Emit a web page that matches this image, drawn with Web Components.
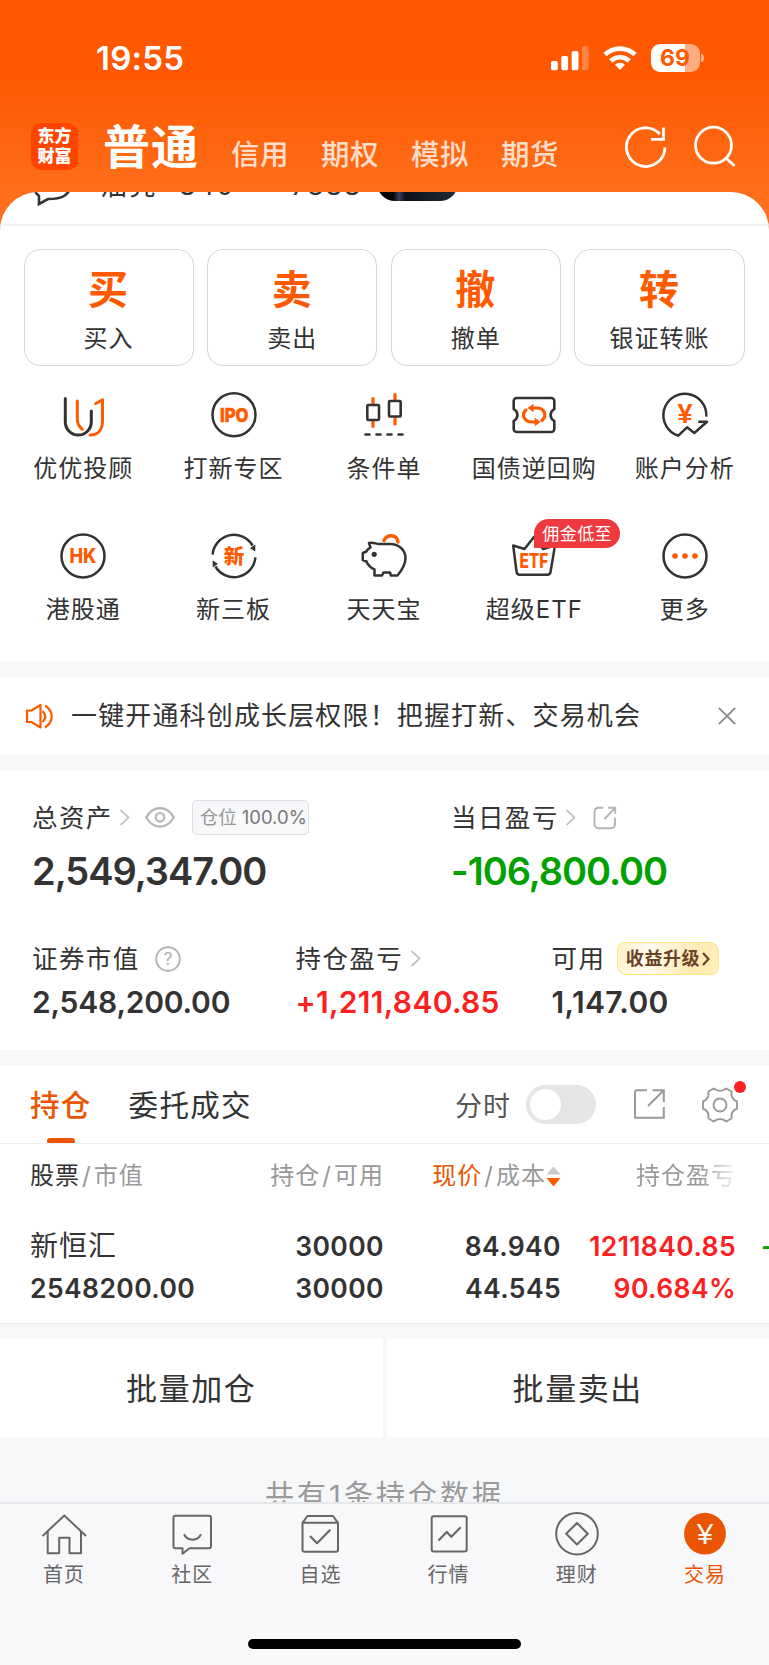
<!DOCTYPE html>
<html lang="zh-CN">
<head>
<meta charset="UTF-8">
<meta name="viewport" content="width=device-width, initial-scale=1.0">
<title>交易</title>
<style>
    body {
        margin: 0;
        font-family: Inter, "Noto Sans CJK SC", sans-serif;
        color: #333;
        background: #f6f7f9;
    }
</style>
</head>
<body>
<trade-app></trade-app>

<script>
const ICONS = {
    refresh: { size: [44, 44], body: `
        <g fill="none" stroke="#fff" stroke-width="2.8">
            <path d="M41 22.5A19.3 19.3 0 1 1 35.8 9"/>
            <path d="M39.5 2.5V14.3H27"/>
        </g>` },
    search: { size: [44, 44], body: `
        <g fill="none" stroke="#fff" stroke-width="2.8">
            <circle cx="20.5" cy="20.2" r="18"/>
            <path d="M33 33L41.5 41"/>
        </g>` },
    signal: { size: [38, 26], body: `
        <g fill="#fff">
            <rect x="0" y="16" width="6.8" height="9.3" rx="1.8"/>
            <rect x="10.3" y="11" width="6.8" height="14.3" rx="1.8"/>
            <rect x="20.7" y="6" width="6.8" height="19.3" rx="1.8"/>
            <rect x="31" y="1" width="6.8" height="24.3" rx="1.8" opacity=".25"/>
        </g>` },
    wifi: { size: [34, 26], body: `
        <g fill="none" stroke="#fff" stroke-width="4.6">
            <path d="M2 9.7a21.5 21.5 0 0 1 30 0"/>
            <path d="M7.8 16a13.2 13.2 0 0 1 18.4 0"/>
        </g>
        <path d="M12 19.8a7.3 7.3 0 0 1 10 0l-5 5.3z" fill="#fff"/>` },
    advisor: { size: [50, 50], body: `
        <g fill="none" stroke-width="3" stroke-linecap="round" stroke-linejoin="round">
            <path d="M7.3 8.5V32A13 13 0 0 0 33.3 32V21" stroke="#333"/>
            <path d="M19.3 11V29c0 4 1.5 7.5 5 10.3M37.7 13.5L44.5 9.7V31c0 9-5 14-12.5 14" stroke="#ff5a00"/>
        </g>` },
    ipo: { size: [50, 50], body: `
        <circle cx="25" cy="24.7" r="21.5" fill="none" stroke="#333" stroke-width="2.5"/>
        <text x="25.2" y="31.6" font-size="19" font-weight="800" text-anchor="middle" fill="#ff5a00" stroke="#ff5a00" stroke-width=".6" textLength="28.5" lengthAdjust="spacingAndGlyphs">IPO</text>` },
    condition: { size: [50, 50], body: `
        <g fill="none" stroke-width="2.6" stroke-linecap="round">
            <path d="M14 8.5V14M14 31V36.5M36 4.5V10M36 28V34" stroke="#ff5a00" stroke-width="3.2"/>
            <rect x="8.3" y="15" width="11.7" height="15" rx="1" stroke="#333"/>
            <rect x="30" y="11" width="11.7" height="15.5" rx="1" stroke="#333"/>
            <path d="M6.5 44.5H10.5M17.5 44.5H21.5M28.5 44.5H32.5M39.5 44.5H43.5" stroke="#333"/>
        </g>` },
    bond: { size: [50, 50], body: `
        <path d="M4.7 19V11a3 3 0 0 1 3-3H42.3a3 3 0 0 1 3 3V19c-5 3-5 9 0 12V39a3 3 0 0 1-3 3H7.7a3 3 0 0 1-3-3V31c5-3 5-9 0-12z" fill="none" stroke="#333" stroke-width="2.6"/>
        <g fill="none" stroke="#ff5a00" stroke-width="3.2" stroke-linecap="round">
            <path d="M23 18H27.5C35.5 18 38.5 25.5 33 30.5"/>
            <path d="M27 32H23C15 32 12 24.5 17 20"/>
        </g>
        <path d="M18.5 18L24.5 13.7V22.3zM31.7 32L25.7 27.7V36.3z" fill="#ff5a00"/>` },
    analysis: { size: [50, 50], body: `
        <path d="M46.3 26.7A21.5 21.5 0 1 0 18.3 45.7L27 37.3L34.3 43L47 31.7H38.3" fill="none" stroke="#333" stroke-width="2.5" stroke-linejoin="round"/>
        <text x="25" y="32.5" font-family="Liberation Sans" font-size="27" font-weight="700" text-anchor="middle" fill="#ff5a00">¥</text>` },
    hk: { size: [50, 50], body: `
        <circle cx="25" cy="25" r="21.5" fill="none" stroke="#333" stroke-width="2.5"/>
        <text x="25" y="32.3" font-size="20" font-weight="800" text-anchor="middle" fill="#ff5a00" textLength="27" lengthAdjust="spacingAndGlyphs">HK</text>` },
    newthird: { size: [50, 50], body: `
        <g fill="none" stroke="#333" stroke-width="2.5">
            <path d="M3.6 23.7A21.5 21.5 0 0 1 43.6 14.5"/>
            <path d="M46.4 26.3A21.5 21.5 0 0 1 6.4 35.5"/>
        </g>
        <path d="M41 17.3L46.3 13.5V20.5zM9 32.7L3.7 36.5V29.5z" fill="#333"/>
        <text x="25" y="32.6" font-size="20.5" font-weight="900" text-anchor="middle" fill="#ff5a00">新</text>` },
    piggy: { size: [50, 50], body: `
        <path d="M10 12C14 10.7 17 13 20 13H31C41 13 46.5 20 46.5 27C46.5 33 43 39 38.5 44.5H32L31 41.5H24.5L23 44.5H15.5V38.5C11 36.5 8.5 33 7.5 30.5L3.8 29V22L7.5 20.5C8 18.5 10 17.5 11.5 16.5Z" fill="none" stroke="#333" stroke-width="2.5" stroke-linejoin="round"/>
        <circle cx="15.2" cy="23.3" r="2.6" fill="#333"/>
        <path d="M25 9.5C28 3 38 3 39 11" fill="none" stroke="#ff5a00" stroke-width="3.4" stroke-linecap="round"/>` },
    etf: { size: [50, 50], body: `
        <path d="M4.2 14.5L7.6 41Q8 43.7 10.6 43.7H38.4Q41 43.7 41.5 41L46 14.5L34 18L25 6L15.5 18Z" fill="none" stroke="#333" stroke-width="2.5" stroke-linejoin="round"/>
        <text x="24.9" y="36.8" font-size="20" font-weight="800" text-anchor="middle" fill="#ff5a00" textLength="29" lengthAdjust="spacingAndGlyphs">ETF</text>` },
    more: { size: [50, 50], body: `
        <circle cx="25" cy="25" r="21.5" fill="none" stroke="#333" stroke-width="2.5"/>
        <g fill="#ff5a00"><circle cx="15" cy="25" r="2.8"/><circle cx="25" cy="25" r="2.8"/><circle cx="35" cy="25" r="2.8"/></g>` },
    speaker: { size: [28, 26], body: `
        <g fill="none" stroke="#ff5a00" stroke-width="2.2" stroke-linejoin="round">
            <path d="M2 7.5H6.5L15.5 2V24.5L6.5 19H2Z"/>
            <path d="M17.5 8C21 11.5 21 15.5 17.5 19M20 2.5C29 8.5 29 18.5 20 24.5"/>
        </g>` },
    close: { size: [18, 18], body: `<path d="M.8.8L17.2 17.2M17.2.8L.8 17.2" stroke="#888" stroke-width="1.8"/>` },
    chevron: { size: [11, 17], body: `<path d="M1.5 1L9.5 8.5L1.5 16" fill="none" stroke="#c4c4c6" stroke-width="1.8"/>` },
    eye: { size: [30, 21], body: `
        <g fill="none" stroke="#b4b4b4" stroke-width="2.1">
            <path d="M1.3 10.5C8-2 22-2 28.7 10.5C22 22.5 8 22.5 1.3 10.5Z" stroke-linejoin="round"/>
            <circle cx="15" cy="10.3" r="4.3"/>
        </g>` },
    shareround: { size: [24, 24], body: `
        <g fill="none" stroke="#b4b4b4" stroke-width="1.9" stroke-linecap="round">
            <path d="M9.5 1.8H5.5a4 4 0 0 0-4 4V18.2a4 4 0 0 0 4 4H18a4 4 0 0 0 4-4V12.5"/>
            <path d="M12 12.5L22 2M16 1.8H22.2V7"/>
        </g>` },
    share: { size: [31, 31], body: `
        <g fill="none" stroke="#999" stroke-width="2" stroke-linejoin="round">
            <path d="M13 1.2H3a2 2 0 0 0-2 2V28.800H29.800V18"/>
            <path d="M14 17L29 2M18.5 1.200H29.800V13"/>
        </g>` },
    help: { size: [26, 26], body: `
        <circle cx="13" cy="13" r="11.800" fill="none" stroke="#b4b4b4" stroke-width="1.900"/>
        <text x="13" y="19" font-size="17" text-anchor="middle" fill="#aaa">?</text>` },
    gear: { size: [38, 38], body: `
        <g fill="none" stroke="#999" stroke-width="1.9" stroke-linejoin="round">
            <path d="M12.7 2.5C16.5 5.5 21.5 5.5 25.3 2.5L30.5 5.5C30 10.5 32 14 36 15.5V22.5C32 24 30 27.5 30.5 32.5L25.3 35.5C21.5 32.5 16.5 32.5 12.7 35.5L7.5 32.5C8 27.5 6 24 2 22.5V15.5C6 14 8 10.5 7.5 5.5Z"/>
            <circle cx="19" cy="19" r="6.5"/>
        </g>` },
    sort: { size: [15, 21], body: `
        <path d="M7.5 0.5L14.5 8.5H.5Z" fill="#c8c8c8"/>
        <path d="M7.5 20.5L14.5 12H.5Z" fill="#ff5a00"/>` },
    home: { size: [46, 46], body: `
        <g fill="none" stroke="currentColor" stroke-width="2">
            <path d="M1.5 25L23.3 4.5L45 25"/>
            <path d="M6.7 20.5V42.3H18.2V26.7H28.5V42.3H40V20.5" stroke-linejoin="round"/>
        </g>` },
    community: { size: [46, 46], body: `
        <g fill="none" stroke="currentColor" stroke-width="2" stroke-linejoin="round">
            <path d="M13.5 37.3H6.5a2 2 0 0 1-2-2V6.7a2 2 0 0 1 2-2H40a2 2 0 0 1 2 2V35.3a2 2 0 0 1-2 2H20.5L13.5 42.7Z"/>
            <path d="M15 23.3C18.5 30.5 28.5 30.5 32 23.3"/>
        </g>` },
    watch: { size: [46, 46], body: `
        <g fill="none" stroke="currentColor" stroke-width="2" stroke-linejoin="round">
            <path d="M5.5 11.8L10.5 5H36L41 11.8V38.7a2 2 0 0 1-2 2H7.5a2 2 0 0 1-2-2ZM5.5 11.8H41"/>
            <path d="M13 25L20 32.3L33.3 18.7"/>
        </g>` },
    market: { size: [46, 46], body: `
        <g fill="none" stroke="currentColor" stroke-width="2">
            <rect x="5.7" y="5.2" width="35" height="35.3" rx="2"/>
            <path d="M12.5 29.5L20.7 21L25.3 25.8L34.7 16.3"/>
        </g>` },
    wealth: { size: [46, 46], body: `
        <g fill="none" stroke="currentColor" stroke-width="2" stroke-linejoin="round">
            <circle cx="23" cy="22.7" r="20.8"/>
            <path d="M23 12L33.8 22.7L23 33.5L12.2 22.7Z"/>
        </g>` },
    trade: { size: [46, 46], body: `
        <circle cx="23" cy="22.7" r="20.9" fill="#ea5504"/>
        <text x="23" y="33" font-family="Liberation Sans" font-size="29" text-anchor="middle" fill="#fff">¥</text>` }
};

class AppIcon extends HTMLElement {
    connectedCallback() {
        const icon = ICONS[this.getAttribute('name')];
        const [w, h] = icon.size;
        this.attachShadow({ mode: 'open' });
        this.shadowRoot.innerHTML = `
            <style>
                :host { display: block; flex: none; width: ${w}px; height: ${h}px; letter-spacing: 0; }
                svg { display: block; overflow: visible; }
            </style>
            <svg width="${w}" height="${h}" viewBox="0 0 ${w} ${h}">${icon.body}</svg>
        `;
    }
}

class StatusBar extends HTMLElement {
    connectedCallback() {
        this.attachShadow({ mode: 'open' });
        this.shadowRoot.innerHTML = `
            <style>
                :host {
                    display: flex;
                    align-items: center;
                    height: 115px;
                    padding: 0 65px 0 96px;
                    box-sizing: border-box;
                    color: #fff;
                }
                time { flex: 1; font-size: 33px; font-weight: 600; line-height: 40px; letter-spacing: 0.2px; }
                .wifi { margin: 0 14px 0 14px; }
                .battery {
                    width: 49px;
                    height: 28px;
                    border-radius: 9px;
                    background: linear-gradient(90deg, #fff 70%, #ffac80 70%);
                    color: #ff5a00;
                    font-size: 23px;
                    font-weight: 700;
                    line-height: 28px;
                    text-align: center;
                }
                .nub { width: 3px; height: 8px; margin-left: 1.5px; border-radius: 0 4px 4px 0; background: #ffac80; }
            </style>
            <time>19:55</time>
            <app-icon name="signal"></app-icon>
            <app-icon class="wifi" name="wifi"></app-icon>
            <div class="battery">69</div>
            <div class="nub"></div>
        `;
    }
}

class TopNav extends HTMLElement {
    connectedCallback() {
        this.attachShadow({ mode: 'open' });
        this.shadowRoot.innerHTML = `
            <style>
                :host { display: flex; height: 76.5px; padding: 0 32px 0 31px; box-sizing: border-box; color: #fff; }
                .logo {
                    width: 47px;
                    height: 47px;
                    margin-top: 8px;
                    padding-top: 4px;
                    box-sizing: border-box;
                    border-radius: 10px;
                    background: #ff4400;
                    font-size: 17px;
                    font-weight: 900;
                    line-height: 19.5px;
                    text-align: center;
                }
                .current { margin: 9px 0 0 25px; width: 128px; font-size: 47px; font-weight: 700; line-height: 46px; letter-spacing: 1px; }
                .others { flex: 1; display: flex; margin-top: 24px; font-size: 28.5px; font-weight: 500; line-height: 31px; letter-spacing: 0.5px; color: rgba(255, 255, 255, 0.8); }
                .others span { width: 90px; }
                .search { margin-left: 25px; }
                app-icon { margin-top: 10px; }
            </style>
            <div class="logo">东方<br>财富</div>
            <div class="current">普通</div>
            <div class="others"><span>信用</span><span>期权</span><span>模拟</span><span>期货</span></div>
            <app-icon name="refresh"></app-icon>
            <app-icon class="search" name="search"></app-icon>
        `;
    }
}

// Index ticker, mostly scrolled away under the header
class IndexTicker extends HTMLElement {
    connectedCallback() {
        this.attachShadow({ mode: 'open' });
        this.shadowRoot.innerHTML = `
            <style>
                :host { display: block; height: 34px; box-sizing: border-box; overflow: hidden; border-bottom: 2px solid #f2f2f3; }
                .row { display: flex; align-items: flex-start; height: 50px; margin-top: -32px; padding-left: 34px; font-size: 27px; line-height: 27px; white-space: nowrap; }
                svg { margin-top: 3px; overflow: visible; }
                span { margin-top: 12px; letter-spacing: 1.5px; }
                .name { margin-left: 27px; width: 79px; letter-spacing: 2px; }
                .num { width: 112px; }
                .change { width: 86px; }
                .pill { width: 81px; height: 40px; margin-top: 1px; border-radius: 18px; background: linear-gradient(90deg, #050505 20%, #3b3f5e 27%, #0d1118 35%, #222b3a); }
            </style>
            <div class="row">
                <svg width="39" height="40" viewBox="0 0 39 40"><path d="M2 30L5 33V41L14 36C26 36 37 34 37 18C37 8 28 2 19 2S1 8 1 18C1 23 1 27 2 30Z" fill="none" stroke="#333" stroke-width="2.6"/></svg>
                <span class="name">油亮</span>
                <span class="num">840</span>
                <span class="change">7388</span>
                <div class="pill"></div>
            </div>
        `;
    }
}

class TradeButton extends HTMLElement {
    connectedCallback() {
        this.attachShadow({ mode: 'open' });
        this.shadowRoot.innerHTML = `
            <style>
                :host {
                    flex: 1;
                    display: flex;
                    flex-direction: column;
                    align-items: center;
                    height: 117px;
                    box-sizing: border-box;
                    border: 1px solid #d6d6d6;
                    border-radius: 16px;
                    background: #fff;
                }
                .char { margin: 20px 1px 0 0; font-size: 40px; font-weight: 700; line-height: 40px; color: #ff5a00; }
                .label { margin-top: 13px; font-size: 24px; line-height: 32px; letter-spacing: 1px; }
            </style>
            <div class="char">${this.getAttribute('char')}</div>
            <div class="label"><slot></slot></div>
        `;
    }
}

class QuickEntry extends HTMLElement {
    connectedCallback() {
        const badge = this.getAttribute('badge');
        this.attachShadow({ mode: 'open' });
        this.shadowRoot.innerHTML = `
            <style>
                :host { position: relative; display: flex; flex-direction: column; align-items: center; height: 140.6px; }
                .label { margin-top: 13px; font-size: 24px; line-height: 32px; letter-spacing: 1px; white-space: nowrap; }
                .badge {
                    position: absolute;
                    left: 75px;
                    top: -12px;
                    width: 86px;
                    height: 29px;
                    border-radius: 15px 15px 15px 0;
                    background: #ee3a3e;
                    color: #fff;
                    font-size: 17px;
                    line-height: 30px;
                    letter-spacing: 0.4px;
                    text-align: center;
                }
            </style>
            <app-icon name="${this.getAttribute('icon')}"></app-icon>
            <div class="label"><slot></slot></div>
            ${badge ? `<div class="badge">${badge}</div>` : ''}
        `;
    }
}

class NoticeBar extends HTMLElement {
    connectedCallback() {
        this.attachShadow({ mode: 'open' });
        this.shadowRoot.innerHTML = `
            <style>
                :host { display: flex; align-items: center; height: 78px; padding: 0 33px 0 25px; box-sizing: border-box; background: #fff; }
                .text { flex: 1; margin-left: 18px; font-size: 26px; line-height: 36px; letter-spacing: 1.15px; white-space: nowrap; }
            </style>
            <app-icon name="speaker"></app-icon>
            <div class="text"><slot></slot></div>
            <app-icon name="close"></app-icon>
        `;
    }
}

class AssetField extends HTMLElement {
    connectedCallback() {
        this.attachShadow({ mode: 'open' });
        this.shadowRoot.innerHTML = `
            <style>
                :host { display: block; }
                .head { display: flex; align-items: center; height: 36px; font-size: 25.5px; line-height: 36px; letter-spacing: 1.4px; white-space: nowrap; }
                .value { font-size: 30px; font-weight: 600; line-height: 40px; margin-top: 5px; color: var(--value-color, #333); letter-spacing: var(--value-spacing, -0.2px); white-space: nowrap; }
                :host([large]) .value { font-size: 38px; line-height: 46px; margin-top: 12px; }
            </style>
            <div class="head">${this.getAttribute('label')}<slot></slot></div>
            <div class="value">${this.getAttribute('value')}</div>
        `;
    }
}

class AssetSummary extends HTMLElement {
    connectedCallback() {
        this.attachShadow({ mode: 'open' });
        this.shadowRoot.innerHTML = `
            <style>
                :host { display: block; height: 279px; padding: 28.5px 0 0 32px; box-sizing: border-box; background: #fff; }
                .total { display: grid; grid-template-columns: 419px 1fr; height: 141px; --value-spacing: -1.05px; }
                .detail { display: grid; grid-template-columns: 263.5px 256px 1fr; }
                .green { --value-color: #00a100; }
                .red { --value-color: #fc2020; --value-spacing: 0.3px; }
                .usable { --value-spacing: 0.4px; }
                .chevron { margin-left: 6.5px; }
                .eye { margin-left: 15px; }
                .shareround { margin-left: 17px; }
                .help { margin-left: 15px; }
                .ratio {
                    width: 117px;
                    height: 35px;
                    margin-left: 16.5px;
                    padding-left: 7px;
                    box-sizing: border-box;
                    border: 1.5px solid #dedfe4;
                    border-radius: 5px;
                    background: #f7f8fa;
                    font-size: 18.5px;
                    line-height: 33px;
                    letter-spacing: 0;
                    color: #999;
                }
                .ratio b { font-weight: 400; color: #777; margin-left: 5px; }
                .upgrade {
                    display: flex;
                    align-items: center;
                    width: 102px;
                    height: 33px;
                    margin-left: 11.5px;
                    padding-left: 8px;
                    box-sizing: border-box;
                    border: 1.5px solid #fde58a;
                    border-radius: 7px 9px;
                    background: linear-gradient(105deg, #fff1c4, #fffaf0 28%, #fff6dc 45%, #ffe9b4 75%, #fff0b8);
                    color: #6b4226;
                    font-size: 18px;
                    font-weight: 700;
                    letter-spacing: 0.6px;
                }
                .upgrade svg { margin-left: 2px; }
            </style>
            <div class="total">
                <asset-field large label="总资产" value="2,549,347.00">
                    <app-icon class="chevron" name="chevron"></app-icon>
                    <app-icon class="eye" name="eye"></app-icon>
                    <span class="ratio">仓位<b>100.0%</b></span>
                </asset-field>
                <asset-field large class="green" label="当日盈亏" value="-106,800.00">
                    <app-icon class="chevron" name="chevron"></app-icon>
                    <app-icon class="shareround" name="shareround"></app-icon>
                </asset-field>
            </div>
            <div class="detail">
                <asset-field label="证券市值" value="2,548,200.00">
                    <app-icon class="help" name="help"></app-icon>
                </asset-field>
                <asset-field class="red" label="持仓盈亏" value="+1,211,840.85">
                    <app-icon class="chevron" name="chevron"></app-icon>
                </asset-field>
                <asset-field class="usable" label="可用" value="1,147.00">
                    <span class="upgrade">收益升级<svg width="8" height="14" viewBox="0 0 8 14"><path d="M1 1L6.5 7L1 13" fill="none" stroke="#6b4226" stroke-width="2.2"/></svg></span>
                </asset-field>
            </div>
        `;
    }
}

class PositionTabs extends HTMLElement {
    connectedCallback() {
        this.attachShadow({ mode: 'open' });
        this.shadowRoot.innerHTML = `
            <style>
                :host { display: flex; align-items: center; height: 78px; padding: 0 30px; box-sizing: border-box; border-bottom: 1px solid #eeeeef; }
                .tab { display: flex; flex-direction: column; align-items: center; height: 77px; font-size: 29.5px; line-height: 78px; letter-spacing: 1.3px; }
                .active { color: #ea5504; font-weight: 500; margin-right: 37px; }
                .active::after { content: ""; width: 28px; height: 5px; margin-top: -6px; border-radius: 3px 3px 1px 1px; background: #ea5504; }
                .time { flex: 1; text-align: right; font-size: 27px; letter-spacing: 1px; color: #555; }
                .switch { width: 70px; height: 39px; margin: 0 38px 0 15px; padding: 4px; box-sizing: border-box; border-radius: 20px; background: #e5e5e7; }
                .switch i { display: block; width: 31px; height: 31px; border-radius: 50%; background: #fff; }
                .settings { position: relative; margin-left: 36px; }
                .dot { position: absolute; right: -7px; top: -5px; width: 12px; height: 12px; border-radius: 50%; background: #fb2222; }
            </style>
            <div class="tab active">持仓</div>
            <div class="tab">委托成交</div>
            <div class="time">分时</div>
            <div class="switch"><i></i></div>
            <app-icon name="share"></app-icon>
            <div class="settings"><app-icon name="gear"></app-icon><i class="dot"></i></div>
        `;
    }
}

class PositionTable extends HTMLElement {
    connectedCallback() {
        this.attachShadow({ mode: 'open' });
        this.shadowRoot.innerHTML = `
            <style>
                :host { display: block; height: 180px; overflow: hidden; box-sizing: border-box; border-bottom: 1px solid #ebecee; }
                .row { display: grid; grid-template-columns: 220px 134px 177px 175px 60px; padding-left: 30px; }
                .row > * { text-align: right; white-space: nowrap; }
                .row > :first-child { text-align: left; }
                .head { height: 64px; font-size: 24px; line-height: 64px; letter-spacing: 1px; color: #999; }
                .head s { text-decoration: none; margin: 0 2px; }
                .head .dark { color: #333; }
                .head .hot { color: #ea5504; }
                .price { display: flex; justify-content: flex-end; align-items: center; }
                .fade { -webkit-mask: linear-gradient(90deg, #000 80%, rgba(0, 0, 0, 0.1)); mask: linear-gradient(90deg, #000 80%, rgba(0, 0, 0, 0.1)); }
                .first { margin-top: 17px; }
                .data { height: 42px; font-size: 26.5px; font-weight: 600; line-height: 42px; letter-spacing: 0.4px; }
                .name { font-size: 28px; font-weight: 400; letter-spacing: 1px; }
                .red { color: #fc2020; }
                .row > .green { color: #00a100; text-align: left; padding-left: 25px; }
            </style>
            <div class="row head">
                <div><span class="dark">股票</span><s>/</s>市值</div>
                <div>持仓<s>/</s>可用</div>
                <div class="price"><span class="hot">现价</span><s>/</s>成本<app-icon name="sort"></app-icon></div>
                <div class="fade">持仓盈亏</div>
            </div>
            <div class="row data first">
                <div class="name">新恒汇</div><div>30000</div><div>84.940</div><div class="red">1211840.85</div><div class="green">-</div>
            </div>
            <div class="row data">
                <div>2548200.00</div><div>30000</div><div>44.545</div><div class="red">90.684%</div>
            </div>
        `;
    }
}

class BatchActions extends HTMLElement {
    connectedCallback() {
        this.attachShadow({ mode: 'open' });
        this.shadowRoot.innerHTML = `
            <style>
                :host { display: grid; grid-template-columns: 1fr 1fr; gap: 4px; }
                div { height: 98px; background: #fff; font-size: 31px; line-height: 100px; letter-spacing: 1.6px; text-align: center; }
            </style>
            <div>批量加仓</div>
            <div>批量卖出</div>
        `;
    }
}

class TabItem extends HTMLElement {
    connectedCallback() {
        this.attachShadow({ mode: 'open' });
        this.shadowRoot.innerHTML = `
            <style>
                :host { flex: 1; display: flex; flex-direction: column; align-items: center; color: #666; font-size: 20px; line-height: 26px; letter-spacing: 1px; }
                :host([active]) { color: #ea5504; }
                span { margin-top: 5px; }
            </style>
            <app-icon name="${this.getAttribute('icon')}"></app-icon>
            <span><slot></slot></span>
        `;
    }
}

class TabBar extends HTMLElement {
    connectedCallback() {
        this.attachShadow({ mode: 'open' });
        this.shadowRoot.innerHTML = `
            <style>
                :host { display: flex; flex-direction: column; align-items: center; height: 163px; box-sizing: border-box; border-top: 2px solid #e6e7ea; background: #f8f8fb; }
                .items { display: flex; width: 100%; height: 135px; padding-top: 7px; box-sizing: border-box; }
                .indicator { width: 273px; height: 10px; border-radius: 5px; background: #000; }
            </style>
            <div class="items"><slot></slot></div>
            <div class="indicator"></div>
        `;
    }
}

class TradeApp extends HTMLElement {
    connectedCallback() {
        this.attachShadow({ mode: 'open' });
        this.shadowRoot.innerHTML = `
            <style>
                :host { display: flex; flex-direction: column; height: 1665px; overflow: hidden; background: #f6f7f9; }
                .hero { background: linear-gradient(180deg, #ff5800 0, #ff5800 75px, #ff6e1a 191px); }
                .sheet { height: 469.5px; overflow: hidden; border-radius: 38px 38px 0 0; background: #fff; }
                .buttons { display: flex; gap: 13.5px; padding: 23.5px 24.5px 0 23.5px; }
                .entries { display: grid; grid-template-columns: repeat(5, 150.4px); padding: 24px 0 0 8px; }
                notice-bar, asset-summary { margin-top: 16px; }
                .positions { margin-top: 16px; background: #fff; }
                batch-actions { margin-top: 15px; }
                .count { flex: 1; min-height: 0; overflow: hidden; padding-top: 39px; text-align: center; font-size: 29px; line-height: 40px; letter-spacing: 3px; color: #999; }
                tab-bar { flex: none; }
            </style>
            <div class="hero">
                <status-bar></status-bar>
                <top-nav></top-nav>
                <div class="sheet">
                    <index-ticker></index-ticker>
                    <div class="buttons">
                        <trade-button char="买">买入</trade-button>
                        <trade-button char="卖">卖出</trade-button>
                        <trade-button char="撤">撤单</trade-button>
                        <trade-button char="转">银证转账</trade-button>
                    </div>
                    <div class="entries">
                        <quick-entry icon="advisor">优优投顾</quick-entry>
                        <quick-entry icon="ipo">打新专区</quick-entry>
                        <quick-entry icon="condition">条件单</quick-entry>
                        <quick-entry icon="bond">国债逆回购</quick-entry>
                        <quick-entry icon="analysis">账户分析</quick-entry>
                        <quick-entry icon="hk">港股通</quick-entry>
                        <quick-entry icon="newthird">新三板</quick-entry>
                        <quick-entry icon="piggy">天天宝</quick-entry>
                        <quick-entry icon="etf" badge="佣金低至">超级ETF</quick-entry>
                        <quick-entry icon="more">更多</quick-entry>
                    </div>
                </div>
            </div>
            <notice-bar>一键开通科创成长层权限！把握打新、交易机会</notice-bar>
            <asset-summary></asset-summary>
            <div class="positions">
                <position-tabs></position-tabs>
                <position-table></position-table>
            </div>
            <batch-actions></batch-actions>
            <div class="count">共有1条持仓数据</div>
            <tab-bar>
                <tab-item icon="home">首页</tab-item>
                <tab-item icon="community">社区</tab-item>
                <tab-item icon="watch">自选</tab-item>
                <tab-item icon="market">行情</tab-item>
                <tab-item icon="wealth">理财</tab-item>
                <tab-item icon="trade" active>交易</tab-item>
            </tab-bar>
        `;
    }
}

customElements.define('app-icon', AppIcon);
customElements.define('status-bar', StatusBar);
customElements.define('top-nav', TopNav);
customElements.define('index-ticker', IndexTicker);
customElements.define('trade-button', TradeButton);
customElements.define('quick-entry', QuickEntry);
customElements.define('notice-bar', NoticeBar);
customElements.define('asset-field', AssetField);
customElements.define('asset-summary', AssetSummary);
customElements.define('position-tabs', PositionTabs);
customElements.define('position-table', PositionTable);
customElements.define('batch-actions', BatchActions);
customElements.define('tab-item', TabItem);
customElements.define('tab-bar', TabBar);
customElements.define('trade-app', TradeApp);
</script>
</body>
</html>
